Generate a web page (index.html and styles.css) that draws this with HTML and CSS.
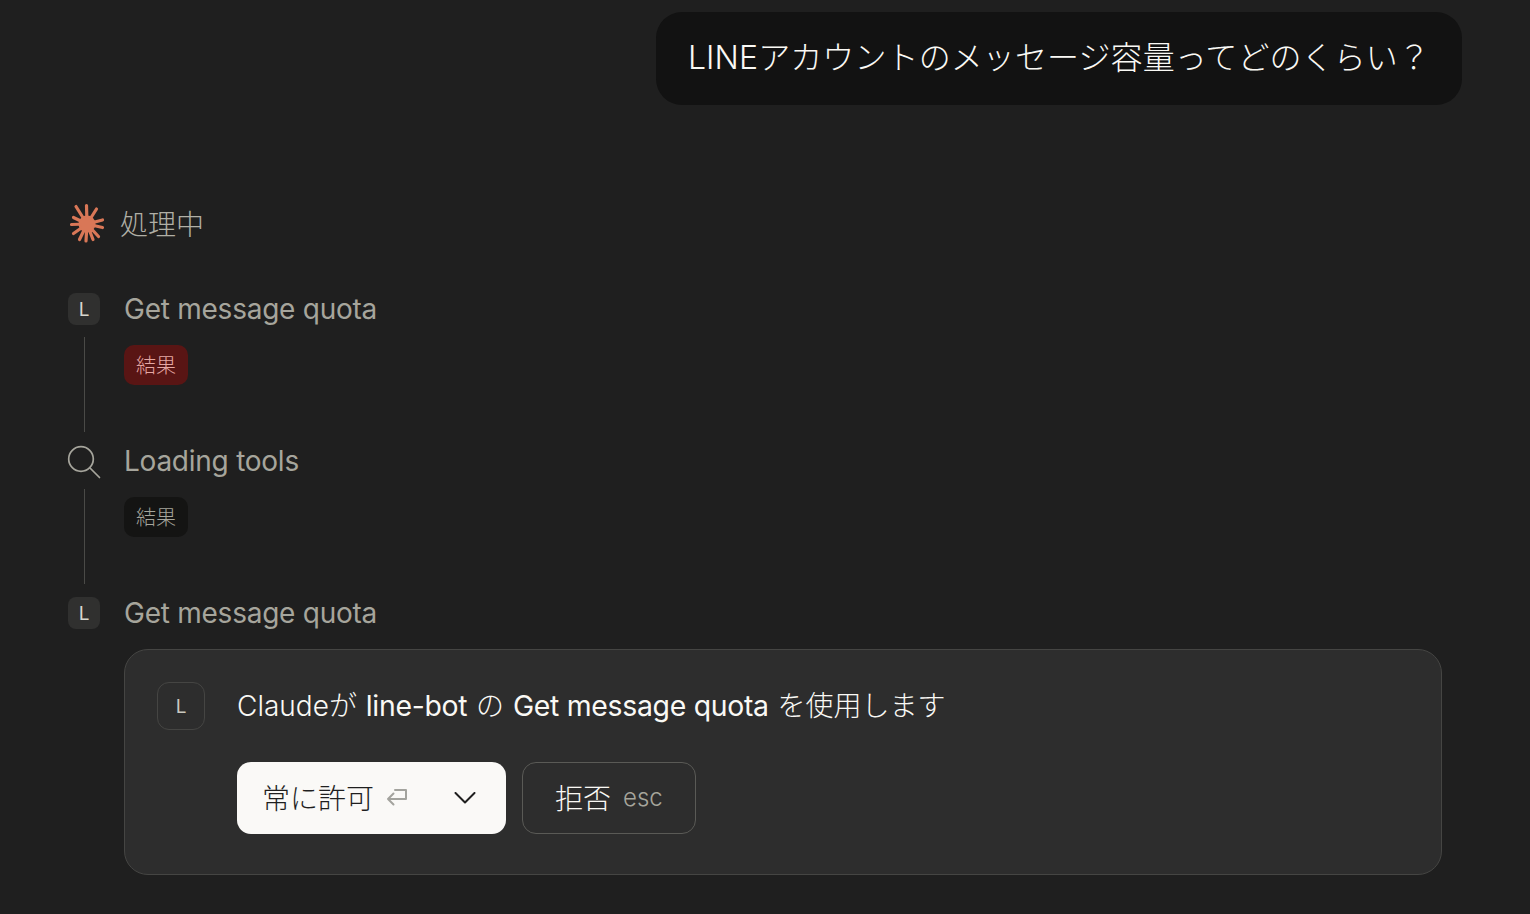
FILE: index.html
```html
<!DOCTYPE html>
<html lang="ja">
<head>
  <meta charset="UTF-8">
  <title>LINE message quota</title>
  <link rel="stylesheet" href="styles.css">
</head>
<body>
  <main class="chat">
    <div class="user-bubble"><span class="user-text">LINEアカウントのメッセージ容量ってどのくらい？</span></div>

    <!-- Thinking status -->
    <div class="status">
      <svg class="spark" width="36" height="40" viewBox="0 0 36 40" fill="none" stroke="#d97757" stroke-width="3.2" stroke-linecap="round">
        <circle cx="18" cy="21" r="8.5" fill="#d97757" stroke="none"/>
        <path d="M18 21L7 3.5M18 21L17.5 2.5M18 21L27.5 6M18 21L33.5 17M18 21L33.5 24.5M18 21L29.5 33.5M18 21L24 36.5M18 21L17 38M18 21L10.5 36.5M18 21L4.5 30.5M18 21L2.5 21.5M18 21L4.5 14.5"/>
      </svg>
      <span>処理中</span>
    </div>

    <!-- Tool steps -->
    <div class="steps">
      <div class="step">
        <div class="rail">
          <div class="tool-icon">L</div>
          <div class="rail-line"></div>
        </div>
        <div class="step-body">
          <div class="step-title">Get message quota</div>
          <div class="badge badge-error">結果</div>
        </div>
      </div>

      <div class="step">
        <div class="rail">
          <svg class="search-icon" width="34" height="34" viewBox="0 0 34 34" fill="none" stroke="#a6a59c" stroke-width="1.7" stroke-linecap="round">
            <circle cx="14" cy="14" r="12.3"/>
            <path d="M23 23L32.5 32.5"/>
          </svg>
          <div class="rail-line"></div>
        </div>
        <div class="step-body">
          <div class="step-title">Loading tools</div>
          <div class="badge">結果</div>
        </div>
      </div>

      <div class="step step-last">
        <div class="rail">
          <div class="tool-icon">L</div>
        </div>
        <div class="step-body">
          <div class="step-title">Get message quota</div>
        </div>
      </div>
    </div>

    <!-- Permission card -->
    <section class="permission">
      <div class="permission-icon">L</div>
      <div class="permission-main">
        <p class="permission-text">Claudeが <b>line-bot</b> の <b>Get message quota</b> を使用します</p>
        <div class="actions">
          <button class="btn btn-allow">
            <span class="btn-label">常に許可</span>
            <svg class="return-icon" width="22" height="20" viewBox="0 0 22 20" fill="none" stroke="#a3a39e" stroke-width="2" stroke-linecap="round" stroke-linejoin="round">
              <path d="M9 2H20V11H2M7.5 5.5L2 11L7.5 16.5"/>
            </svg>
            <svg class="chevron" width="22" height="12" viewBox="0 0 22 12" fill="none" stroke="#1f1f1f" stroke-width="2" stroke-linecap="round" stroke-linejoin="round">
              <path d="M1.5 1L11 10.5L20.5 1"/>
            </svg>
          </button>
          <button class="btn btn-deny">
            <span class="btn-label">拒否</span>
            <span class="key">esc</span>
          </button>
        </div>
      </div>
    </section>
  </main>
</body>
</html>
```

FILE: styles.css
```css
* { box-sizing: border-box; }

body {
  margin: 0;
  height: 914px;
  overflow: hidden;
  background: #1f1f1f;
  color: #faf9f5;
  font-family: "Inter", "Noto Sans CJK JP", sans-serif;
  font-weight: 300;
}

.chat {
  display: flex;
  flex-direction: column;
  padding: 12px 68px 0;
}

.user-bubble {
  align-self: flex-end;
  height: 93px;
  padding: 0 36px 7px 32px;
  display: flex;
  align-items: center;
  background: #121212;
  border-radius: 26px;
  font-size: 32px;
  letter-spacing: 0.1px;
  white-space: nowrap;
}

.user-text { margin-right: -4px; }

.status {
  display: flex;
  align-items: center;
  gap: 15px;
  height: 40px;
  margin-top: 98px;
  padding-left: 1px;
  color: #b0afa6;
  font-size: 28px;
}

.spark { flex: none; }

.steps { margin-top: 50px; }

.step {
  display: flex;
  gap: 24px;
  height: 152px;
}

.step-last { height: 52px; }

.rail {
  width: 32px;
  display: flex;
  flex-direction: column;
  align-items: center;
}

.tool-icon {
  width: 32px;
  height: 32px;
  flex: none;
  display: flex;
  align-items: center;
  justify-content: center;
  background: #30302f;
  border-radius: 8px;
  color: #d8d7ce;
  font-size: 19px;
  font-weight: 400;
}

.search-icon {
  flex: none;
  height: 34px;
  margin-bottom: 9px;
}

.rail-line {
  width: 1px;
  height: 95px;
  margin-top: 12px;
  background: #4a4a47;
}

.search-icon + .rail-line { margin-top: 1px; }

.step-title {
  height: 32px;
  display: flex;
  align-items: center;
  color: #a6a59c;
  font-size: 28px;
  font-weight: 400;
  letter-spacing: -0.25px;
  white-space: nowrap;
}

.badge {
  width: 64px;
  height: 40px;
  margin-top: 20px;
  padding-bottom: 2px;
  display: flex;
  align-items: center;
  justify-content: center;
  background: #141413;
  border-radius: 10px;
  color: #a6a59c;
  font-size: 20px;
}

.badge-error {
  background: #591514;
  color: #e6a8a4;
}

.permission {
  display: flex;
  gap: 32px;
  margin: 0 20px 0 56px;
  height: 226px;
  padding: 32px;
  background: #2d2d2d;
  border: 1px solid #454543;
  border-radius: 24px;
}

.permission-icon {
  width: 48px;
  height: 48px;
  flex: none;
  display: flex;
  align-items: center;
  justify-content: center;
  border: 1px solid #454543;
  border-radius: 12px;
  color: #c9c8bf;
  font-size: 19px;
  font-weight: 400;
}

.permission-text {
  margin: 0;
  line-height: 48px;
  font-size: 28px;
  font-weight: 300;
  word-spacing: 1px;
  white-space: nowrap;
}

.permission-text b {
  font-size: 28.4px;
  font-weight: 400;
  letter-spacing: -0.3px;
  word-spacing: 0;
}

.actions {
  display: flex;
  gap: 16px;
  margin-top: 32px;
}

.btn {
  height: 72px;
  display: flex;
  align-items: center;
  border-radius: 14px;
  font-family: inherit;
  font-size: 28px;
  font-weight: 300;
  padding: 0;
}

.btn-label { margin-bottom: 3px; }

.btn-allow {
  width: 269px;
  padding-left: 25px;
  background: #faf9f7;
  border: none;
  color: #1f1f1f;
}

.return-icon { margin-left: 12px; }

.chevron { margin-left: 46px; }

.btn-deny {
  width: 174px;
  padding-left: 32px;
  gap: 12px;
  background: transparent;
  border: 1px solid #5a5a56;
  color: #faf9f5;
}

.key {
  margin-bottom: 1px;
  color: #a6a59c;
  font-size: 24px;
}
```
